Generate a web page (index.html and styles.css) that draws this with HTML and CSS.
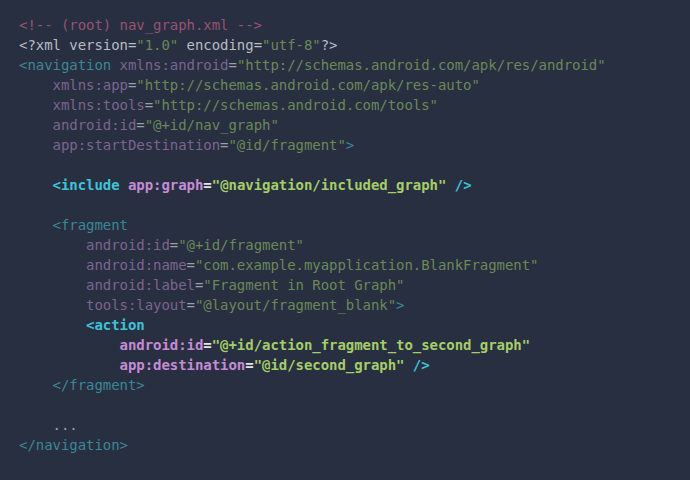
FILE: index.html
```html
<!DOCTYPE html>
<html lang="en">
<head>
    <meta charset="UTF-8">
    <title>nav_graph.xml</title>
    <link rel="stylesheet" href="styles.css">
</head>
<body>
    <div class="code-block">
<pre class="code"><span class="comment">&lt;!-- (root) nav_graph.xml --&gt;</span>
<span class="prolog">&lt;?xml version=<span class="str">"1.0"</span> encoding=<span class="str">"utf-8"</span>?&gt;</span>
<span class="tag">&lt;navigation</span> <span class="attr">xmlns:android</span><span class="eq">=</span><span class="str">"http://schemas.android.com/apk/res/android"</span>
    <span class="attr">xmlns:app</span><span class="eq">=</span><span class="str">"http://schemas.android.com/apk/res-auto"</span>
    <span class="attr">xmlns:tools</span><span class="eq">=</span><span class="str">"http://schemas.android.com/tools"</span>
    <span class="attr">android:id</span><span class="eq">=</span><span class="str">"@+id/nav_graph"</span>
    <span class="attr">app:startDestination</span><span class="eq">=</span><span class="str">"@id/fragment"</span><span class="tag">&gt;</span>

    <span class="hl"><span class="tag">&lt;include</span> <span class="attr">app:graph</span><span class="eq">=</span><span class="str">"@navigation/included_graph"</span> <span class="tag">/&gt;</span></span>

    <span class="tag">&lt;fragment</span>
        <span class="attr">android:id</span><span class="eq">=</span><span class="str">"@+id/fragment"</span>
        <span class="attr">android:name</span><span class="eq">=</span><span class="str">"com.example.myapplication.BlankFragment"</span>
        <span class="attr">android:label</span><span class="eq">=</span><span class="str">"Fragment in Root Graph"</span>
        <span class="attr">tools:layout</span><span class="eq">=</span><span class="str">"@layout/fragment_blank"</span><span class="tag">&gt;</span>
        <span class="hl"><span class="tag">&lt;action</span>
            <span class="attr">android:id</span><span class="eq">=</span><span class="str">"@+id/action_fragment_to_second_graph"</span>
            <span class="attr">app:destination</span><span class="eq">=</span><span class="str">"@id/second_graph"</span> <span class="tag">/&gt;</span></span>
    <span class="tag">&lt;/fragment&gt;</span>

    <span class="ellipsis">...</span>
<span class="tag">&lt;/navigation&gt;</span></pre>
    </div>
</body>
</html>
```

FILE: styles.css
```css
* {
    box-sizing: border-box;
    margin: 0;
    padding: 0;
}

html, body {
    background: #272f40;
    min-height: 100vh;
}

.code-block {
    padding: 15px 19px;
}

.code {
    font-family: "DejaVu Sans Mono", "Liberation Mono", monospace;
    font-size: 14px;
    line-height: 20px;
    letter-spacing: -0.05px;
    color: #b9bdc5;
}

.comment  { color: #9a5274; }
.prolog   { color: #b9bdc5; }
.tag      { color: #3b8798; }
.attr     { color: #7e6490; }
.eq       { color: #9aa0aa; }
.str      { color: #6c8859; }
.ellipsis { color: #9aa0aa; }

.prolog .str { color: #6c8859; }

/* highlighted lines */
.hl { font-weight: bold; }
.hl .tag  { color: #3fc3da; }
.hl .attr { color: #c68bd6; }
.hl .eq   { color: #e2e4e8; }
.hl .str  { color: #a5cd69; }
```
